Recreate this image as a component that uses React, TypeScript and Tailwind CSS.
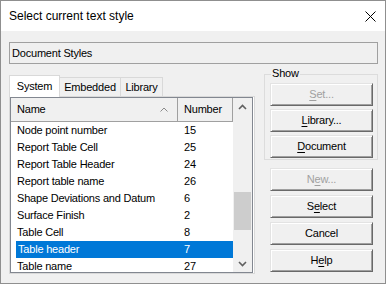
import React from "react";

const rows: [string, string][] = [
  ["Node point number", "15"],
  ["Report Table Cell", "25"],
  ["Report Table Header", "24"],
  ["Report table name", "26"],
  ["Shape Deviations and Datum", "6"],
  ["Surface Finish", "2"],
  ["Table Cell", "8"],
  ["Table header", "7"],
  ["Table name", "27"],
];

function Btn({
  pre,
  u,
  post,
  disabled,
}: {
  pre: string;
  u?: string;
  post?: string;
  disabled?: boolean;
}) {
  return (
    <div
      className={
        "w-[103px] h-[23px] flex items-center justify-center bg-[#f0f0f0] border border-t-[#e3e3e3] border-l-[#e3e3e3] border-b-[#696969] border-r-[#696969] shadow-[inset_1px_1px_#ffffff,inset_-1px_-1px_#a0a0a0] " +
        (disabled ? "text-[#a0a0a0]" : "text-black")
      }
    >
      <span>
        {pre}
        {u && <span className="underline underline-offset-[2px]">{u}</span>}
        {post}
      </span>
    </div>
  );
}

export default function App() {
  return (
    <div className="w-[386px] h-[284px] bg-[#f0f0f0] border border-[#8f8f8f] flex flex-col text-[11px] tracking-[-0.2px] leading-none text-black font-['Liberation_Sans',Arial,sans-serif] overflow-hidden">
      {/* Title bar */}
      <div className="h-[30px] bg-white flex items-center justify-between pl-[8px] pr-[9px] shrink-0">
        <span className="text-[12px] tracking-normal">Select current text style</span>
        <svg width="11" height="11" viewBox="0 0 11 11">
          <path d="M0.5 0.5 L10.5 10.5 M10.5 0.5 L0.5 10.5" stroke="#000" strokeWidth="1" />
        </svg>
      </div>

      {/* Body */}
      <div className="flex flex-col pl-[8px]">
        <div className="mt-[11px] w-[369px] h-[22px] border border-[#a0a0a0] flex items-center pl-[2px]">
          Document Styles
        </div>

        <div className="flex">
          {/* Left tab control */}
          <div className="flex flex-col w-[246px] mt-[11px]">
            <div className="flex items-end h-[21px] relative z-10">
              <div className="w-[51px] h-[22px] -mb-[1px] bg-white border border-b-0 border-[#d9d9d9] flex items-center justify-center">
                System
              </div>
              <div className="w-[61px] h-[19px] bg-[#f0f0f0] border border-l-0 border-b-0 border-[#d9d9d9] flex items-center justify-center">
                Embedded
              </div>
              <div className="w-[42px] h-[19px] bg-[#f0f0f0] border border-l-0 border-b-0 border-[#d9d9d9] flex items-center justify-center">
                Library
              </div>
            </div>
            <div className="h-[178px] border border-[#d9d9d9] bg-white">
              <div className="w-[243px] h-[176px] border border-[#828790] bg-white flex overflow-hidden">
                {/* list content */}
                <div className="w-[222px] flex flex-col overflow-hidden">
                  <div className="h-[24px] shrink-0 flex bg-[#f0f0f0] border-b border-[#a0a0a0]">
                    <div className="w-[167px] border-r border-[#a0a0a0] flex items-center pl-[6px] pr-[9px] justify-between">
                      <span>Name</span>
                      <svg width="8" height="5" viewBox="0 0 8 5">
                        <path d="M0.5 4.5 L4 1 L7.5 4.5" fill="none" stroke="#8a8a8a" strokeWidth="1" />
                      </svg>
                    </div>
                    <div className="w-[55px] border-r border-[#a0a0a0] flex items-center pl-[6px]">
                      Number
                    </div>
                  </div>
                  {rows.map(([n, v]) => {
                    const sel = n === "Table header";
                    return (
                      <div
                        key={n}
                        className={
                          "h-[17px] shrink-0 ml-[5px] flex items-center " +
                          (sel ? "bg-[#0078d7] text-white" : "")
                        }
                      >
                        <div className={"w-[162px] " + (sel ? "pl-[2px]" : "pl-[1px]")}>{n}</div>
                        <div className="pl-[6px]">{v}</div>
                      </div>
                    );
                  })}
                </div>
                {/* scrollbar */}
                <div className="w-[19px] bg-[#f0f0f0] flex flex-col">
                  <div className="h-[17px] flex items-center justify-center">
                    <svg width="9" height="6" viewBox="0 0 9 6">
                      <path d="M1 5 L4.5 1.5 L8 5" fill="none" stroke="#606060" strokeWidth="1.6" />
                    </svg>
                  </div>
                  <div className="flex-1 pt-[77px] px-[1px]">
                    <div className="h-[38px] bg-[#cdcdcd]" />
                  </div>
                  <div className="h-[17px] flex items-center justify-center">
                    <svg width="9" height="6" viewBox="0 0 9 6">
                      <path d="M1 1 L4.5 4.5 L8 1" fill="none" stroke="#606060" strokeWidth="1.6" />
                    </svg>
                  </div>
                </div>
              </div>
            </div>
          </div>

          {/* Right column */}
          <div className="ml-[9px] mt-[10px] flex flex-col">
            <div className="relative w-[114px] h-[86px] border border-[#dcdcdc] pt-[8px] pl-[5px] flex flex-col gap-[3px]">
              <span className="absolute left-[6px] -top-[7px] bg-[#f0f0f0] px-[1px]">Show</span>
              <Btn pre="" u="S" post="et..." disabled />
              <Btn pre="" u="L" post="ibrary..." />
              <Btn pre="" u="D" post="ocument" />
            </div>
            <div className="mt-[8px] pl-[6px] flex flex-col gap-[4px]">
              <Btn pre="N" u="e" post="w..." disabled />
              <Btn pre="S" u="e" post="lect" />
              <Btn pre="Cancel" />
              <Btn pre="H" u="e" post="lp" />
            </div>
          </div>
        </div>
      </div>
    </div>
  );
}
